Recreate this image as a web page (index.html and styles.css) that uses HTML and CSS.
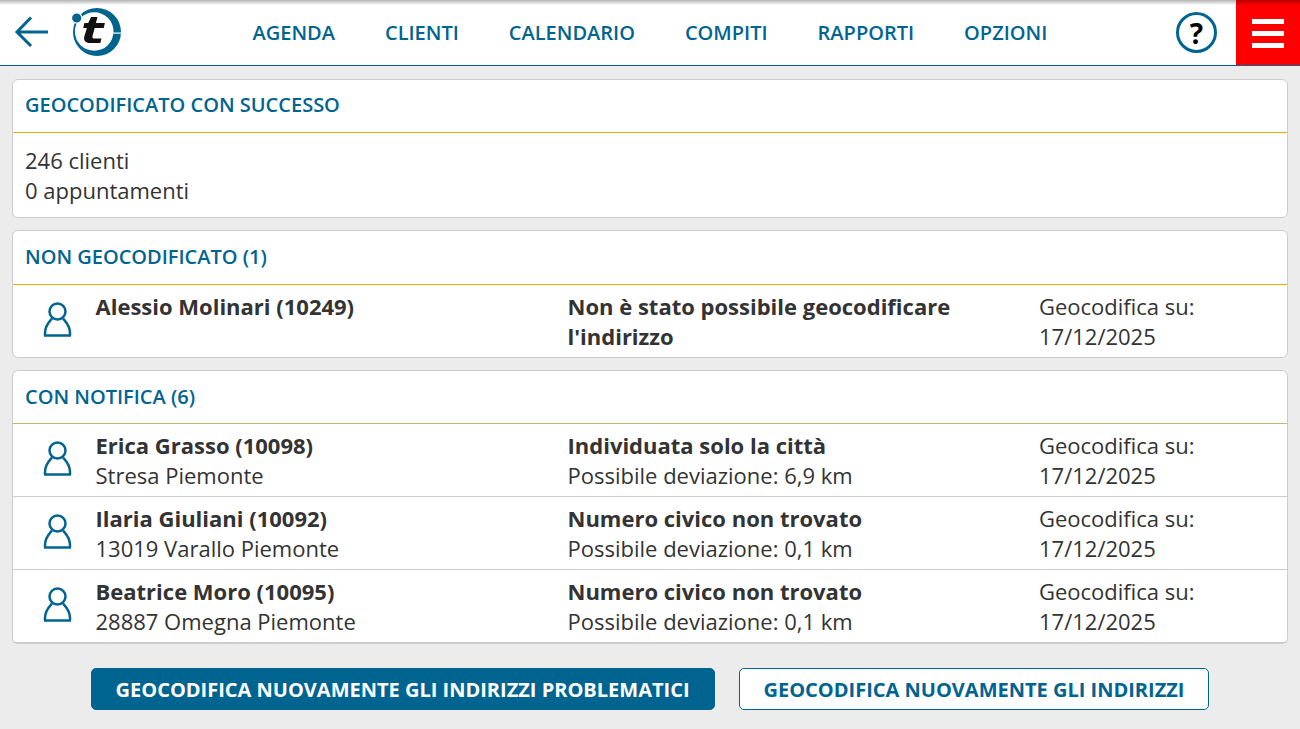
FILE: index.html
```html
<!DOCTYPE html>
<html lang="it">
<head>
<meta charset="utf-8">
<title>Geocodifica</title>
<link rel="stylesheet" href="styles.css">
</head>
<body>
<header class="topbar">
  <div class="brand">
    <svg class="back" width="36" height="36" viewBox="0 0 36 36"><path d="M34 18H3.500M17 3.500 3 18l14 14" fill="none" stroke="#006491" stroke-width="3"/></svg>
    <svg class="logo" width="50" height="50" viewBox="0 0 50 50">
      <path fill-rule="evenodd" d="M1 25a24 24 0 1 0 48 0a24 24 0 1 0-48 0zM2.900 24.500a19.300 19.300 0 1 0 38.600 0a19.300 19.300 0 1 0-38.600 0z" fill="#006491"/>
      <rect x="41" y="25.500" width="9" height="1.200" fill="#fff"/>
      <circle cx="4.700" cy="11" r="5.200" fill="#006491" stroke="#fff" stroke-width="1.200"/>
      <path d="M19 10h6.500l-1.600 6h9l-1.200 5h-9l-2.200 8c-.5 2 .5 2.500 2.500 2.500h6.500l-1.200 4.500h-10c-5 0-7-2.500-6-6.500l2.600-8.500h-3.700l1.200-5h3.800z" fill="#111"/>
    </svg>
  </div>
  <nav class="nav">
    <a>AGENDA</a><a>CLIENTI</a><a>CALENDARIO</a><a>COMPITI</a><a>RAPPORTI</a><a>OPZIONI</a>
  </nav>
  <div class="help">?</div>
  <div class="menu"><span></span><span></span><span></span></div>
</header>
<main class="content">
  <section class="card">
    <h2 class="card-title yellow">GEOCODIFICATO CON SUCCESSO</h2>
    <div class="summary">246 clienti<br>0 appuntamenti</div>
  </section>
  <section class="card">
    <h2 class="card-title yellow tall">NON GEOCODIFICATO (1)</h2>
    <div class="row single">
      <svg class="person" width="30" height="36" viewBox="0 0 30 36"><circle cx="14.500" cy="9.500" r="8" fill="none" stroke="#006491" stroke-width="2.500"/><path d="M2 33.500v-2.500c0-8 5-12 7-14.500M27 33.500v-2.500c0-8-5-12-7-14.500M1 33.500h27" fill="none" stroke="#006491" stroke-width="2.500"/></svg>
      <div class="who"><b>Alessio Molinari (10249)</b></div>
      <div class="issue"><b>Non è stato possibile geocodificare l'indirizzo</b></div>
      <div class="date">Geocodifica su:<br>17/12/2025</div>
    </div>
  </section>
  <section class="card">
    <h2 class="card-title tan">CON NOTIFICA (6)</h2>
    <div class="row">
      <svg class="person" width="30" height="36" viewBox="0 0 30 36"><circle cx="14.500" cy="9.500" r="8" fill="none" stroke="#006491" stroke-width="2.500"/><path d="M2 33.500v-2.500c0-8 5-12 7-14.500M27 33.500v-2.500c0-8-5-12-7-14.500M1 33.500h27" fill="none" stroke="#006491" stroke-width="2.500"/></svg>
      <div class="who"><b>Erica Grasso (10098)</b><br>Stresa Piemonte</div>
      <div class="issue"><b>Individuata solo la città</b><br>Possibile deviazione: 6,9 km</div>
      <div class="date">Geocodifica su:<br>17/12/2025</div>
    </div>
    <div class="row sep">
      <svg class="person" width="30" height="36" viewBox="0 0 30 36"><circle cx="14.500" cy="9.500" r="8" fill="none" stroke="#006491" stroke-width="2.500"/><path d="M2 33.500v-2.500c0-8 5-12 7-14.500M27 33.500v-2.500c0-8-5-12-7-14.500M1 33.500h27" fill="none" stroke="#006491" stroke-width="2.500"/></svg>
      <div class="who"><b>Ilaria Giuliani (10092)</b><br>13019 Varallo Piemonte</div>
      <div class="issue"><b>Numero civico non trovato</b><br>Possibile deviazione: 0,1 km</div>
      <div class="date">Geocodifica su:<br>17/12/2025</div>
    </div>
    <div class="row sep">
      <svg class="person" width="30" height="36" viewBox="0 0 30 36"><circle cx="14.500" cy="9.500" r="8" fill="none" stroke="#006491" stroke-width="2.500"/><path d="M2 33.500v-2.500c0-8 5-12 7-14.500M27 33.500v-2.500c0-8-5-12-7-14.500M1 33.500h27" fill="none" stroke="#006491" stroke-width="2.500"/></svg>
      <div class="who"><b>Beatrice Moro (10095)</b><br>28887 Omegna Piemonte</div>
      <div class="issue"><b>Numero civico non trovato</b><br>Possibile deviazione: 0,1 km</div>
      <div class="date">Geocodifica su:<br>17/12/2025</div>
    </div>
  </section>
</main>
<footer class="actions">
  <button class="btn primary">GEOCODIFICA NUOVAMENTE GLI INDIRIZZI PROBLEMATICI</button>
  <button class="btn">GEOCODIFICA NUOVAMENTE GLI INDIRIZZI</button>
</footer>
</body>
</html>
```
FILE: styles.css
```css
* { box-sizing: border-box; }
html, body { height: 100%; }
body {
  margin: 0;
  background: #ececec;
  font-family: "Open Sans", "Noto Sans", sans-serif;
  font-size: 22px;
  line-height: 30px;
  color: #333;
  overflow: hidden;
}
.topbar {
  position: relative;
  height: 66px;
  display: flex;
  align-items: stretch;
  background: #fff;
  border-bottom: 1px solid #006491;
}
.topbar::before {
  content: "";
  position: absolute;
  left: 0; right: 0; top: 0;
  height: 5px;
  background: linear-gradient(rgba(0,0,0,.3), rgba(0,0,0,0));
  pointer-events: none;
  z-index: 1;
}
.brand { width: 228px; display: flex; align-items: center; flex: none; padding: 0 0 1px 14px; }
.back { margin-right: 22px; flex: none; }
.logo { flex: none; }
.nav { display: flex; gap: 50px; align-items: center; padding-left: 24.500px; flex: 1; }
.nav a { font-size: 20px; font-weight: 600; color: #006491; }
.help {
  width: 41px; height: 41px; margin: 12px 19px 0 0;
  border: 3px solid #006491; border-radius: 50%;
  display: flex; align-items: center; justify-content: center;
  font-size: 28px; font-weight: 700; color: #000;
  flex: none;
}
.menu {
  width: 64px; background: #f00; flex: none;
  display: flex; flex-direction: column; gap: 7px; align-items: center; justify-content: center;
  padding-top: 2px;
}
.menu span { display: block; width: 32px; height: 5px; background: #fff; }
.content { padding: 13px 12px 0; display: flex; flex-direction: column; gap: 12px; }
.card {
  background: #fff;
  border: 1px solid #ccc;
  border-radius: 6px;
}
.card-title {
  margin: 0;
  height: 53px;
  padding: 0 12px 2px;
  display: flex;
  align-items: center;
  font-size: 20px;
  font-weight: 600;
  color: #006491;
  border-bottom: 1px solid #ccc;
}
.card-title.yellow { border-bottom-color: #e8b100; }
.card-title.tan { border-bottom-color: #c9b478; padding-bottom: 1px; }
.card-title.tall { height: 54px; }
.summary { height: 84px; padding: 12px 12px 0; }
.row { display: flex; padding: 6px 12px 0 0; height: 72px; }
.row.sep { border-top: 1px solid #ccc; height: 73px; }
.row.sep:last-child { border-bottom: 1px solid #ccc; height: 74px; }
.row b { font-weight: 700; }
.person { flex: none; margin: 11px 22.500px 0 30px; }
.who { width: 472px; flex: none; }
.issue { width: 471.500px; flex: none; padding-right: 70px; }
.date { flex: 1; }
.actions { display: flex; justify-content: center; gap: 24px; padding-top: 24px; }
.btn {
  height: 42px;
  padding: 0 24px;
  font-family: inherit;
  font-size: 20px;
  font-weight: 700;
  color: #006491;
  background: #fff;
  border: 1px solid #006491;
  border-radius: 5px;
}
.btn.primary { background: #006491; color: #fff; }
```
